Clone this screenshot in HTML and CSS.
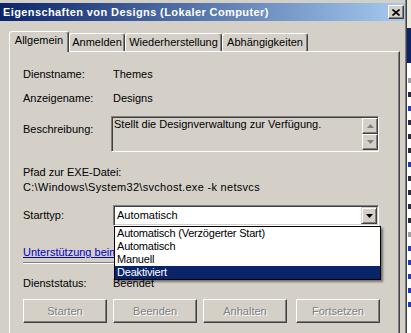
FILE: index.html
```html
<!DOCTYPE html>
<html lang="de">
    <head>
        <meta charset="UTF-8" />
        <title>Eigenschaften von Designs</title>
        <link rel="stylesheet" href="styles.css">
    </head>
    <body>
        <div class="screen">
            <div class="dialog">
                <div class="titlebar">
                    <span class="title">Eigenschaften von Designs (Lokaler Computer)</span>
                    <button class="close">
                        <svg width="8" height="7" viewBox="0 0 8 7">
                            <path d="M0.5 0.5 L7.5 6.5 M7.5 0.5 L0.5 6.5" stroke="#000" stroke-width="1.6" fill="none" />
                        </svg>
                    </button>
                </div>

                <div class="tabs">
                    <div class="tab active tab-general">Allgemein</div>
                    <div class="tab tab-logon">Anmelden</div>
                    <div class="tab tab-recovery">Wiederherstellung</div>
                    <div class="tab tab-deps">Abhängigkeiten</div>
                </div>

                <div class="panel">
                    <div class="field">
                        <span class="label">Dienstname:</span>
                        <span class="value">Themes</span>
                    </div>
                    <div class="field gap">
                        <span class="label">Anzeigename:</span>
                        <span class="value">Designs</span>
                    </div>
                    <div class="field gap">
                        <span class="label label-desc">Beschreibung:</span>
                        <div class="desc-box">
                            <span class="desc-text">Stellt die Designverwaltung zur Verfügung.</span>
                            <div class="scrollbar">
                                <div class="scroll-btn">
                                    <svg width="7" height="4" viewBox="0 0 7 4"><path d="M3.5 0 L7 4 L0 4 Z" fill="#808080" /></svg>
                                </div>
                                <div class="scroll-track"></div>
                                <div class="scroll-btn">
                                    <svg width="7" height="4" viewBox="0 0 7 4"><path d="M0 0 L7 0 L3.5 4 Z" fill="#808080" /></svg>
                                </div>
                            </div>
                        </div>
                    </div>

                    <p class="path-label">Pfad zur EXE-Datei:</p>
                    <p class="path-value">C:\Windows\System32\svchost.exe -k netsvcs</p>

                    <div class="field field-start">
                        <span class="label label-start">Starttyp:</span>
                        <div class="combo">
                            <span class="combo-text">Automatisch</span>
                            <div class="combo-btn">
                                <svg width="7" height="4" viewBox="0 0 7 4"><path d="M0 0 L7 0 L3.5 4 Z" fill="#000" /></svg>
                            </div>
                            <ul class="combo-list">
                                <li>Automatisch (Verzögerter Start)</li>
                                <li>Automatisch</li>
                                <li>Manuell</li>
                                <li class="selected">Deaktiviert</li>
                            </ul>
                        </div>
                    </div>

                    <a class="help-link" href="#">Unterstützung beim Konfigurieren</a>

                    <div class="separator"></div>

                    <div class="field field-status">
                        <span class="label">Dienststatus:</span>
                        <span class="value">Beendet</span>
                    </div>

                    <div class="actions">
                        <button class="btn" disabled>Starten</button>
                        <button class="btn" disabled>Beenden</button>
                        <button class="btn" disabled>Anhalten</button>
                        <button class="btn btn-last" disabled>Fortsetzen</button>
                    </div>
                </div>
            </div>

            <!-- edge of the window lying behind the dialog -->
            <div class="behind">
                <div class="behind-top"></div>
                <div class="behind-bar"></div>
                <div class="behind-lines">
                    <i class="mark grey"></i>
                    <i class="mark blk"></i>
                    <i class="mark blu"></i>
                    <i class="mark blk"></i>
                    <i class="mark blk"></i>
                    <i class="mark blk"></i>
                    <i class="mark blu"></i>
                    <i class="mark blk"></i>
                    <i class="mark blk"></i>
                    <i class="mark blk"></i>
                    <i class="mark blk"></i>
                    <i class="mark grey"></i>
                    <i class="mark blu"></i>
                    <i class="mark blu"></i>
                    <i class="mark blu"></i>
                    <i class="mark blu"></i>
                    <i class="mark blu"></i>
                </div>
            </div>
        </div>
    </body>
</html>
```

FILE: styles.css
```css
* {
    margin: 0;
    padding: 0;
    box-sizing: border-box;
}

body {
    width: 411px;
    height: 333px;
    overflow: hidden;
    font-family: 'Liberation Sans', Arial, sans-serif;
    font-size: 11px;
    line-height: 13px;
    color: #000;
    background-color: #d4d0c8;
}

.screen {
    display: flex;
    height: 333px;
}

/* dialog window */

.dialog {
    flex: none;
    width: 407px;
    height: 333px;
    padding-top: 3px;
    background-color: #d4d0c8;
    border-right: 1px solid #404040;
    box-shadow: inset -1px 0 #808080;
    overflow: hidden;
}

.titlebar {
    width: 405px;
    height: 18px;
    display: flex;
    align-items: center;
    justify-content: space-between;
    padding: 0 1px 0 3px;
    background: linear-gradient(to right, #0a246a, #a6caf0);
}

.title {
    color: #fff;
    font-weight: bold;
    font-size: 11px;
    letter-spacing: 0.4px;
}

.close {
    width: 16px;
    height: 14px;
    display: flex;
    justify-content: center;
    align-items: center;
    background-color: #d4d0c8;
    border: 1px solid;
    border-color: #fff #404040 #404040 #fff;
    box-shadow: inset -1px -1px #808080;
}

/* tabs */

.tabs {
    display: flex;
    align-items: flex-end;
    height: 30px;
    padding-left: 9px;
}

.tab {
    height: 18px;
    text-align: center;
    line-height: 16px;
    border: 1px solid;
    border-bottom: none;
    border-color: #fff #404040 #fff #fff;
    border-radius: 3px 3px 0 0;
    box-shadow: inset -1px 0 #808080;
}

.tab.active {
    position: relative;
    z-index: 1;
    height: 21px;
    margin-bottom: -1px;
    line-height: 17px;
    background-color: #d4d0c8;
}

.tab-general {
    width: 60px;
}

.tab-logon {
    width: 56px;
}

.tab-recovery {
    width: 97px;
}

.tab-deps {
    width: 86px;
}

.panel {
    width: 391px;
    height: 320px;
    margin-left: 9px;
    padding: 16px 0 0 13px;
    border-top: 1px solid #fff;
    border-left: 1px solid #fff;
    border-right: 1px solid #404040;
    box-shadow: inset -1px 0 #808080;
}

/* fields */

.field {
    display: flex;
}

.field.gap {
    margin-top: 11px;
}

.label {
    flex: none;
    width: 90px;
}

.label-desc {
    padding-top: 7px;
}

.desc-box {
    display: flex;
    justify-content: space-between;
    width: 268px;
    height: 36px;
    margin-left: -2px;
    border: 1px solid;
    border-color: #808080 #fff #fff #808080;
    box-shadow: inset 1px 1px #404040;
}

.desc-text {
    padding: 1px 0 0 2px;
}

.scrollbar {
    display: flex;
    flex-direction: column;
    width: 16px;
    margin: 1px 0 1px 0;
}

.scroll-btn {
    flex: none;
    width: 16px;
    height: 16px;
    display: flex;
    justify-content: center;
    align-items: center;
    border: 1px solid;
    border-color: #fff #404040 #404040 #fff;
    box-shadow: inset -1px -1px #808080;
}

.scroll-track {
    flex: 1;
    background-image: repeating-linear-gradient(90deg, #fff 0 1px, #d4d0c8 1px 2px);
}

.path-label {
    margin-top: 14px;
}

.path-value {
    margin-top: 2px;
    letter-spacing: 0.3px;
}

.field-start {
    margin-top: 11px;
}

.label-start {
    padding-top: 4px;
}

.combo {
    position: relative;
    display: flex;
    justify-content: space-between;
    align-items: center;
    width: 266px;
    height: 21px;
    background-color: #fff;
    border: 1px solid;
    border-color: #808080 #fff #fff #808080;
    box-shadow: inset 1px 1px #404040, inset -1px -1px #d4d0c8;
}

.combo-text {
    padding-left: 3px;
}

.combo-btn {
    width: 16px;
    height: 17px;
    margin-right: 1px;
    display: flex;
    justify-content: center;
    align-items: center;
    background-color: #d4d0c8;
    border: 1px solid;
    border-color: #d4d0c8 #404040 #404040 #d4d0c8;
    box-shadow: inset 1px 1px #fff, inset -1px -1px #808080;
}

.combo-list {
    position: absolute;
    top: 20px;
    left: 0;
    z-index: 5;
    width: 267px;
    list-style: none;
    background-color: #fff;
    border: 1px solid #000;
    box-shadow: 2px 2px 2px rgba(0, 0, 0, 0.45);
}

.combo-list li {
    height: 13px;
    padding-left: 2px;
    line-height: 13px;
    letter-spacing: -0.2px;
}

.combo-list li.selected {
    background-color: #0a246a;
    color: #fff;
}

.help-link {
    display: block;
    width: fit-content;
    margin-top: 20px;
    color: #0000cc;
    white-space: nowrap;
}

.separator {
    width: 356px;
    height: 2px;
    margin-top: 3px;
    border-top: 1px solid #808080;
    border-bottom: 1px solid #fff;
}

.field-status {
    margin-top: 13px;
}

/* buttons */

.actions {
    display: flex;
    gap: 6px;
    margin-top: 9px;
}

.btn {
    width: 84px;
    height: 24px;
    font-family: inherit;
    font-size: 11px;
    color: #808080;
    text-shadow: 1px 1px #fff;
    background-color: #d4d0c8;
    border: 1px solid;
    border-color: #fff #404040 #404040 #fff;
    box-shadow: inset -1px -1px #808080;
}

.btn-last {
    margin-left: 3px;
}

/* window behind the dialog */

.behind {
    flex: 1;
    height: 333px;
    overflow: hidden;
    background-color: #fff;
}

.behind-top {
    height: 28px;
    background-color: #ece9d8;
}

.behind-bar {
    height: 35px;
    background-color: #0a246a;
}

.behind-lines {
    display: flex;
    flex-direction: column;
    gap: 9px;
    padding: 15px 0 0 1px;
}

.mark {
    display: block;
    width: 3px;
    height: 5px;
}

.mark.blk {
    background-color: #2a2a40;
}

.mark.blu {
    background-color: #1a3cc8;
}

.mark.grey {
    background-color: #a0a0a0;
}
```
